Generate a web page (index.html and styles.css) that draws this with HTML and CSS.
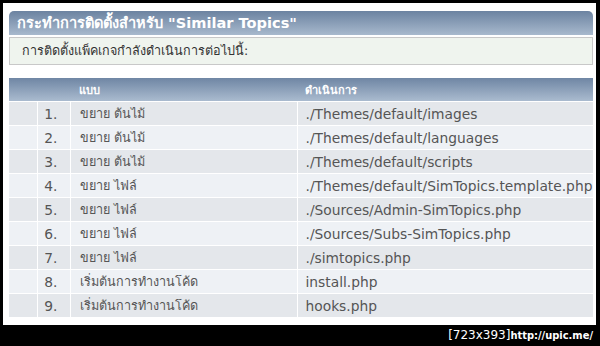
FILE: index.html
```html
<!DOCTYPE html>
<html>
<head>
<meta charset="utf-8">
<link rel="stylesheet" href="styles.css">
</head>
<body>
<div class="page">
  <div class="titlebar">กระทำการติดตั้งสำหรับ "Similar Topics"</div>
  <div class="info">การติดตั้งแพ็คเกจกำลังดำเนินการต่อไปนี้:</div>
  <table class="actions">
    <thead>
      <tr><th class="c1"></th><th class="c2"></th><th class="c3">แบบ</th><th class="c4">ดำเนินการ</th></tr>
    </thead>
    <tbody>
      <tr><td></td><td class="num">1.</td><td class="type">ขยาย ต้นไม้</td><td>./Themes/default/images</td></tr>
      <tr><td></td><td class="num">2.</td><td class="type">ขยาย ต้นไม้</td><td>./Themes/default/languages</td></tr>
      <tr><td></td><td class="num">3.</td><td class="type">ขยาย ต้นไม้</td><td>./Themes/default/scripts</td></tr>
      <tr><td></td><td class="num">4.</td><td class="type">ขยาย ไฟล์</td><td>./Themes/default/SimTopics.template.php</td></tr>
      <tr><td></td><td class="num">5.</td><td class="type">ขยาย ไฟล์</td><td>./Sources/Admin-SimTopics.php</td></tr>
      <tr><td></td><td class="num">6.</td><td class="type">ขยาย ไฟล์</td><td>./Sources/Subs-SimTopics.php</td></tr>
      <tr><td></td><td class="num">7.</td><td class="type">ขยาย ไฟล์</td><td>./simtopics.php</td></tr>
      <tr><td></td><td class="num">8.</td><td class="type">เริ่มต้นการทำงานโค้ด</td><td>install.php</td></tr>
      <tr><td></td><td class="num">9.</td><td class="type">เริ่มต้นการทำงานโค้ด</td><td>hooks.php</td></tr>
    </tbody>
  </table>
</div>
<div class="footer"><span class="dims">[723x393]</span><span class="url">http://upic.me/</span></div>
</body>
</html>
```
FILE: styles.css
```css
html, body {
  margin: 0;
  padding: 0;
  background: #000;
}
body {
  width: 600px;
  height: 346px;
  overflow: hidden;
  font-family: "DejaVu Sans", "Noto Sans", sans-serif;
}
.page {
  margin: 3px 4px 0 3px;
  height: 322px;
  background: #fff;
  padding: 8px 3px 0 6px;
  box-sizing: border-box;
}
.titlebar {
  height: 24px;
  border-radius: 5px 5px 0 0;
  background: linear-gradient(#6c83a1, #a8b9cd);
  color: #fff;
  font-weight: bold;
  font-size: 14.6px;
  line-height: 24px;
  padding-left: 8px;
}
.info {
  margin-top: 2px;
  height: 26px;
  border: 1px solid #c8c8c8;
  background: #eff4ee;
  color: #333;
  font-size: 12.6px;
  line-height: 25px;
  padding-left: 12px;
}
.actions {
  margin-top: 13px;
  width: 100%;
  border-collapse: collapse;
  table-layout: fixed;
}
.actions th {
  height: 23px;
  padding: 0;
  background: linear-gradient(#6f86a4, #aabbcf);
  color: #fff;
  font-weight: bold;
  font-size: 11px;
  text-align: left;
}
.actions .c1 { width: 28px; }
.actions .c2 { width: 33px; }
.actions .c3 { width: 218px; padding-left: 9px; }
.actions .c4 { padding-left: 8px; }
.actions td {
  height: 23px;
  padding: 0;
  border-left: 1px solid #fff;
  border-top: 1px solid #fff;
  color: #555;
  font-size: 13.8px;
  background: #e4e7eb;
  white-space: nowrap;
}
.actions td:first-child { border-left: none; }
.actions td.type { padding-left: 9px; font-size: 12.6px; }
.actions td:nth-child(4) { padding-left: 8px; }
.actions tbody tr:nth-child(even) td { background: #eef1f5; }
.actions td.num {
  text-align: right;
  padding-right: 12px;
}
.footer {
  height: 21px;
  text-align: right;
  padding-right: 7px;
  color: #fff;
  font-size: 12px;
  line-height: 21px;
}
.footer .dims {
  font-family: "DejaVu Sans", sans-serif;
}
.footer .url {
  font-family: "DejaVu Sans Condensed", "DejaVu Sans", sans-serif;
  font-weight: bold;
  font-size: 11px;
}
```
